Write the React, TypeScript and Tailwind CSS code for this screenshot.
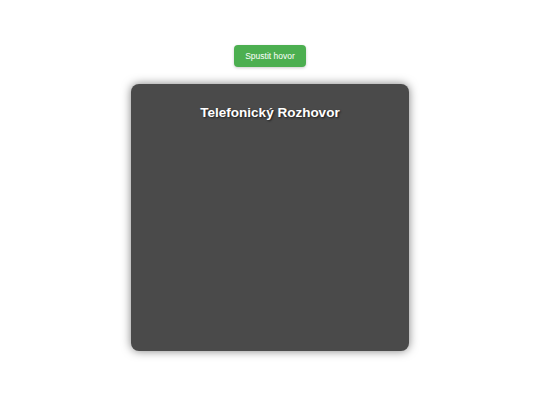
export default function App() {
  return (
    <div className="w-[540px] h-[405px] bg-white flex flex-col items-center pt-[45px] font-['Liberation_Sans',Arial,sans-serif]">
      <button className="w-[72px] h-[22px] bg-[#4caf50] text-white text-[8.5px] rounded-[4px] shadow-[0_1px_3px_rgba(0,0,0,0.2)]">
        Spustit hovor
      </button>
      <div className="mt-[17px] w-[278px] h-[267px] bg-[#4a4a4a] rounded-[8px] shadow-[0_0_10px_rgba(0,0,0,0.5)] flex flex-col items-center pt-[19px]">
        <h1 className="text-white font-bold text-[13.5px] leading-[20px] [text-shadow:1px_1px_2px_rgba(0,0,0,0.6)]">
          Telefonický Rozhovor
        </h1>
      </div>
    </div>
  );
}
